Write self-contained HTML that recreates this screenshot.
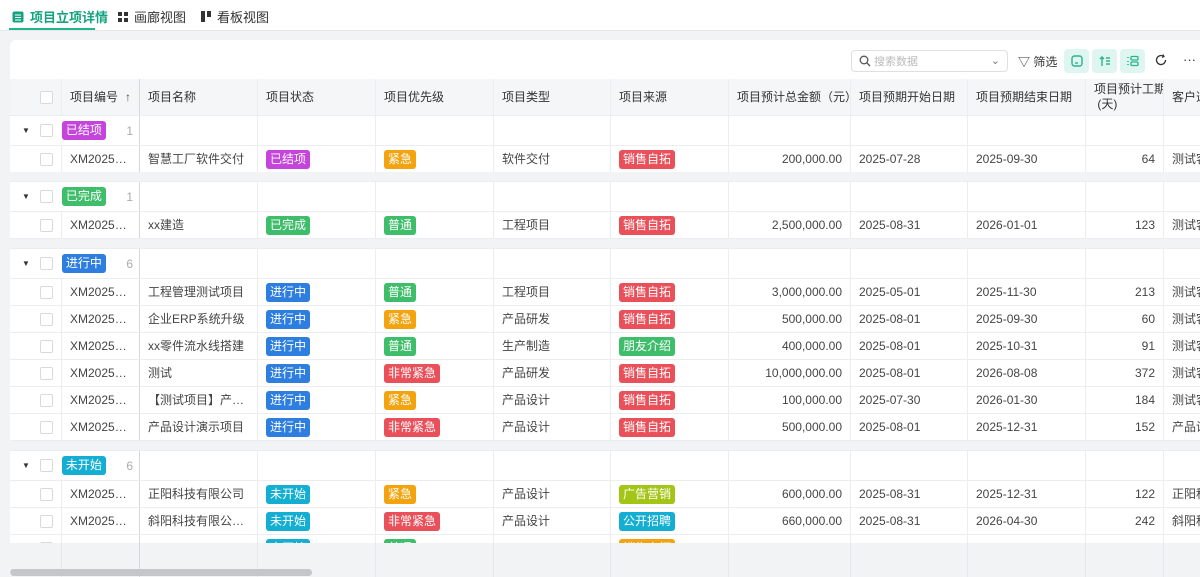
<!DOCTYPE html>
<html><head><meta charset="utf-8"><style>
*{box-sizing:border-box;margin:0;padding:0}
body{width:1200px;height:577px;overflow:hidden;background:#f2f3f5;font-family:"Liberation Sans","Noto Sans CJK SC",sans-serif;font-size:12px;color:#333;position:relative}
.tabs{position:absolute;left:0;top:0;width:1200px;height:31px;background:#fff;border-bottom:1px solid #e8e8e8}
.tab{position:absolute;top:7px;font-size:13px;color:#333;display:flex;align-items:center;gap:6px}
.tab.act{color:#14a37f;font-weight:bold}
.uline{position:absolute;left:9px;top:28px;width:86px;height:2px;background:#1fb58f}
.card{position:absolute;left:10px;top:40px;width:1200px;height:537px;background:#fff;border-radius:6px 0 0 6px;overflow:hidden}
.row{position:absolute;left:0;display:flex;height:27px;line-height:26px;border-bottom:1px solid #ebedf0;background:#fff}
.c{height:100%;border-right:1px solid #ebedf0;display:block;padding:0 8px;white-space:nowrap;overflow:hidden;text-overflow:ellipsis;flex:none;color:#444}
.r{text-align:right}
.hd .c{display:flex;align-items:center;color:#333;line-height:15px}
.hd{background:#f5f6f7}
.cb{width:13px;height:13px;border:1px solid #d9d9d9;border-radius:2px;background:#fff;display:inline-block;vertical-align:middle}
.t{display:inline-block;color:#fff;border-radius:3px;padding:0 4px;height:19px;line-height:19px;font-size:12px;vertical-align:middle}
.pu{background:#c544dc}.gr{background:#3ebd6a}.bl{background:#2e7ee0}.cy{background:#13aed1}.or{background:#f3a30d}.rd{background:#e9505a}.lg{background:#a3c516}
.gap{position:absolute;left:0;width:1200px;height:10px;background:#f2f3f5;border-bottom:1px solid #ebedf0}
.btn{position:absolute;top:49px;width:25px;height:24px;border-radius:4px;background:#dff5ef;display:flex;align-items:center;justify-content:center}
</style></head><body>
<div class="tabs">
<div class="tab act" style="left:12px"><svg width="12" height="12"><rect x="0.5" y="0.5" width="11" height="11" rx="2" fill="#14a37f"/><path d="M3 4h6M3 6.5h6M3 9h6" stroke="#fff" stroke-width="1"/></svg>项目立项详情</div>
<div class="tab" style="left:118px"><svg width="10" height="10"><rect x="0" y="0" width="4" height="4" fill="#333"/><rect x="6" y="0" width="4" height="4" fill="#333"/><rect x="0" y="6" width="4" height="4" fill="#333"/><rect x="6" y="6" width="4" height="4" fill="#333"/></svg>画廊视图</div>
<div class="tab" style="left:201px"><svg width="10" height="11"><rect x="0" y="0" width="4" height="11" fill="#333"/><rect x="6" y="0" width="4" height="6" fill="#333"/></svg>看板视图</div>
<div class="uline"></div>
</div>
<div class="card" id="card"></div>
<div style="position:absolute;left:851px;top:50px;width:157px;height:22px;border:1px solid #dcdfe6;border-radius:4px;background:#fff;display:flex;align-items:center;padding-left:7px;color:#bbb;font-size:11px"><svg width="12" height="12"><circle cx="5" cy="5" r="3.8" stroke="#555" stroke-width="1.3" fill="none"/><path d="M8 8l3 3" stroke="#555" stroke-width="1.3"/></svg>&nbsp;搜索数据<span style="position:absolute;right:7px;top:3px;color:#777">⌄</span></div>
<div style="position:absolute;left:1018px;top:53px;font-size:12px;color:#333">▽ 筛选</div>
<div class="btn" style="left:1064px"><svg width="12" height="12"><rect x="1" y="1" width="10" height="10" rx="2.5" stroke="#2bb48b" stroke-width="1.4" fill="none"/><path d="M4 8h3" stroke="#2bb48b" stroke-width="1.4"/></svg></div>
<div class="btn" style="left:1092px"><svg width="12" height="12"><path d="M3 11V2M1 4l2-2 2 2M7 3h4M7 6h4M7 9h4" stroke="#2bb48b" stroke-width="1.4" fill="none"/></svg></div>
<div class="btn" style="left:1120px"><svg width="12" height="12"><path d="M1 2v1M1 6v1M1 9v1" stroke="#2bb48b" stroke-width="1.6"/><rect x="4" y="1.5" width="7" height="3.5" rx="1" stroke="#2bb48b" stroke-width="1.3" fill="none"/><rect x="4" y="7" width="7" height="3.5" rx="1" stroke="#2bb48b" stroke-width="1.3" fill="none"/></svg></div>
<div style="position:absolute;left:1155px;top:54px"><svg width="12" height="12"><path d="M10.5 6A4.5 4.5 0 1 1 8.5 2.3" stroke="#333" stroke-width="1.3" fill="none"/><path d="M8 0.5l1 2-2 1" stroke="#333" stroke-width="1.2" fill="none"/></svg></div>
<div style="position:absolute;left:1183px;top:52px;color:#333;font-size:13px">···</div>
<script>
const W=[52,78,118,118,118,117,118,122,117,118,78,60];
const card=document.getElementById('card');
function row(top,h,cells,cls){let d=document.createElement('div');d.className='row '+(cls||'');d.style.top=top+'px';d.style.height=h+'px';
let s='';W.forEach((w,i)=>{let c=cells[i]||'';let ex=(i==1?'border-right:1px solid #d4d7dc;':'');let al='';if(typeof c==='object'){al=c.a||'';c=c.t}
s+=`<div class="c ${al}" style="width:${w}px;${ex}">${c}</div>`});d.innerHTML=s;card.appendChild(d);return d}
const cb='<span class="cb" style="margin-left:22px"></span>';
row(39,37,[`<span class="cb" style="margin-left:22px"></span>`,'项目编号<span style="margin-left:auto;color:#555">↑</span>','项目名称','项目状态','项目优先级','项目类型','项目来源','项目预计总金额（元）','项目预期开始日期','项目预期结束日期','<span>项目预计工期<br>&nbsp;(天)</span>','客户选'],'hd');
const tag=(t,c)=>`<span class="t ${c}">${t}</span>`;
function grp(top,name,c,n){let d=document.createElement('div');d.className='row';d.style.top=top+'px';d.style.height=30+'px';
let s='';W.forEach((w,i)=>{if(i==0)s+=`<div class="c" style="width:${w+78}px;border-right:1px solid #d4d7dc;padding:0 6px 0 12px;display:flex;align-items:center"><span style="font-size:8px;color:#333">▼</span><span class="cb" style="margin-left:10px"></span><span class="t ${c}" style="margin-left:9px">${name}</span><span style="margin-left:auto;color:#aaa">${n}</span></div>`;else if(i>1)s+=`<div class="c" style="width:${w}px"></div>`});d.innerHTML=s;card.appendChild(d)}
function data(top,a){row(top,27,[cb,a[0],a[1],a[2],a[3],a[4],a[5],{t:a[6],a:'r'},a[7],a[8],{t:a[9],a:'r'},a[10]])}
function gap(top){let g=document.createElement('div');g.className='gap';g.style.top=top+'px';card.appendChild(g)}
grp(76,'已结项','pu',1);
data(106,['XM2025072...','智慧工厂软件交付',tag('已结项','pu'),tag('紧急','or'),'软件交付',tag('销售自拓','rd'),'200,000.00','2025-07-28','2025-09-30','64','测试客']);
gap(132);
grp(142,'已完成','gr',1);
data(172,['XM2025081...','xx建造',tag('已完成','gr'),tag('普通','gr'),'工程项目',tag('销售自拓','rd'),'2,500,000.00','2025-08-31','2026-01-01','123','测试客']);
gap(199);
grp(209,'进行中','bl',6);
const ing=[['XM2025072...','工程管理测试项目','普通','gr','工程项目','销售自拓','rd','3,000,000.00','2025-05-01','2025-11-30','213','测试客'],
['XM2025072...','企业ERP系统升级','紧急','or','产品研发','销售自拓','rd','500,000.00','2025-08-01','2025-09-30','60','测试客'],
['XM2025072...','xx零件流水线搭建','普通','gr','生产制造','朋友介绍','gr','400,000.00','2025-08-01','2025-10-31','91','测试客'],
['XM2025072...','测试','非常紧急','rd','产品研发','销售自拓','rd','10,000,000.00','2025-08-01','2026-08-08','372','测试客'],
['XM2025073...','【测试项目】产品设...','紧急','or','产品设计','销售自拓','rd','100,000.00','2025-07-30','2026-01-30','184','测试客'],
['XM2025081...','产品设计演示项目','非常紧急','rd','产品设计','销售自拓','rd','500,000.00','2025-08-01','2025-12-31','152','产品设']];
ing.forEach((r,i)=>data(239+27*i,[r[0],r[1],tag('进行中','bl'),tag(r[2],r[3]),r[4],tag(r[5],r[6]),r[7],r[8],r[9],r[10],r[11]]));
gap(401);
grp(411,'未开始','cy',6);
data(441,['XM2025081...','正阳科技有限公司',tag('未开始','cy'),tag('紧急','or'),'产品设计',tag('广告营销','lg'),'600,000.00','2025-08-31','2025-12-31','122','正阳科']);
data(468,['XM2025081...','斜阳科技有限公司IT...',tag('未开始','cy'),tag('非常紧急','rd'),'产品设计',tag('公开招聘','cy'),'660,000.00','2025-08-31','2026-04-30','242','斜阳科']);
row(495,27,[cb,'','',`<span class="t cy">未开始</span>`,`<span class="t gr">普通</span>`,'',`<span class="t or">销售自拓</span>`]);
let f=document.createElement('div');f.style.cssText='position:absolute;left:0;top:503px;width:1200px;height:34px;background:#f2f3f5;display:flex';
f.innerHTML=W.map((w,i)=>`<div style="width:${w}px;flex:none;border-right:1px solid ${i==1?'#d4d7dc':'#e6e8eb'}"></div>`).join('');card.appendChild(f);
let sb=document.createElement('div');sb.style.cssText='position:absolute;left:0;top:529px;width:302px;height:7px;border-radius:4px;background:#c4c6ca';card.appendChild(sb);
</script>
</body></html>
